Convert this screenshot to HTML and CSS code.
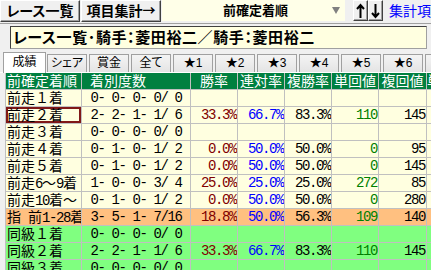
FILE: index.html
```html
<!DOCTYPE html>
<html lang="ja">
<head>
<meta charset="utf-8">
<title>集計</title>
<link rel="stylesheet" href="styles.css">
</head>
<body>
<div class="app">
  <div class="toolbar">
    <div class="btn btn-list">レース一覧</div>
    <div class="btn btn-agg">項目集計<span class="fw">→</span></div>
    <div class="combo"><span class="combo-text">前確定着順</span><span class="combo-arrow"></span></div>
    <div class="arrows">
      <div class="abtn"><svg width="9" height="16" viewBox="0 0 9 16"><path d="M4.5 2V15M1 6L4.5 2L8 6" fill="none" stroke="#000" stroke-width="2"/></svg></div>
      <div class="abtn"><svg width="9" height="16" viewBox="0 0 9 16"><path d="M4.5 1V14M1 10L4.5 14L8 10" fill="none" stroke="#000" stroke-width="2"/></svg></div>
    </div>
    <div class="link">集計項目</div>
  </div>
  <div class="titlebar">
    <div class="titlebox">レース一覧･騎手：菱田裕二／騎手：菱田裕二</div>
  </div>
  <div class="tabs">
    <div class="tab active">成績</div>
    <div class="tab">シェア</div>
    <div class="tab">賞金</div>
    <div class="tab">全て</div>
    <div class="tab">★1</div>
    <div class="tab">★2</div>
    <div class="tab">★3</div>
    <div class="tab">★4</div>
    <div class="tab">★5</div>
    <div class="tab">★6</div>
    <div class="tab">★7</div>
  </div>
  <div class="table">
    <div class="row head">
      <div class="c name">前確定着順</div>
      <div class="c cnt-h">着別度数</div>
      <div class="c ctr">勝率</div>
      <div class="c ctr">連対率</div>
      <div class="c ctr">複勝率</div>
      <div class="c ctr">単回値</div>
      <div class="c ctr">複回値</div>
      <div class="c">単勝人</div>
    </div>
    <div class="row">
      <div class="c name">前走１着</div>
      <div class="c cnt">0- 0- 0- 0/ 0</div>
      <div class="c num win"></div><div class="c num ren"></div><div class="c num"></div><div class="c num tan"></div><div class="c num"></div><div class="c"></div>
    </div>
    <div class="row">
      <div class="c name sel">前走２着</div>
      <div class="c cnt">2- 2- 1- 1/ 6</div>
      <div class="c num win">33.3%</div><div class="c num ren">66.7%</div><div class="c num">83.3%</div><div class="c num tan">110</div><div class="c num">145</div><div class="c"></div>
    </div>
    <div class="row">
      <div class="c name">前走３着</div>
      <div class="c cnt">0- 0- 0- 0/ 0</div>
      <div class="c num win"></div><div class="c num ren"></div><div class="c num"></div><div class="c num tan"></div><div class="c num"></div><div class="c"></div>
    </div>
    <div class="row">
      <div class="c name">前走４着</div>
      <div class="c cnt">0- 1- 0- 1/ 2</div>
      <div class="c num win">0.0%</div><div class="c num ren">50.0%</div><div class="c num">50.0%</div><div class="c num tan">0</div><div class="c num">95</div><div class="c"></div>
    </div>
    <div class="row">
      <div class="c name">前走５着</div>
      <div class="c cnt">0- 1- 0- 1/ 2</div>
      <div class="c num win">0.0%</div><div class="c num ren">50.0%</div><div class="c num">50.0%</div><div class="c num tan">0</div><div class="c num">145</div><div class="c"></div>
    </div>
    <div class="row">
      <div class="c name">前走<span class="hw">6</span>～<span class="hw">9</span>着</div>
      <div class="c cnt">1- 0- 0- 3/ 4</div>
      <div class="c num win">25.0%</div><div class="c num ren">25.0%</div><div class="c num">25.0%</div><div class="c num tan">272</div><div class="c num">85</div><div class="c"></div>
    </div>
    <div class="row">
      <div class="c name">前走<span class="hw">10</span>着～</div>
      <div class="c cnt">0- 1- 0- 1/ 2</div>
      <div class="c num win">0.0%</div><div class="c num ren">50.0%</div><div class="c num">50.0%</div><div class="c num tan">0</div><div class="c num">280</div><div class="c"></div>
    </div>
    <div class="row orange">
      <div class="c name">指<span class="hw"> </span>前<span class="hw">1-28</span>着</div>
      <div class="c cnt">3- 5- 1- 7/16</div>
      <div class="c num win">18.8%</div><div class="c num ren">50.0%</div><div class="c num">56.3%</div><div class="c num tan">109</div><div class="c num">140</div><div class="c"></div>
    </div>
    <div class="row green">
      <div class="c name">同級１着</div>
      <div class="c cnt">0- 0- 0- 0/ 0</div>
      <div class="c num win"></div><div class="c num ren"></div><div class="c num"></div><div class="c num tan"></div><div class="c num"></div><div class="c"></div>
    </div>
    <div class="row green">
      <div class="c name">同級２着</div>
      <div class="c cnt">2- 2- 1- 1/ 6</div>
      <div class="c num win">33.3%</div><div class="c num ren">66.7%</div><div class="c num">83.3%</div><div class="c num tan">110</div><div class="c num">145</div><div class="c"></div>
    </div>
    <div class="row green">
      <div class="c name">同級３着</div>
      <div class="c cnt">0- 0- 0- 0/ 0</div>
      <div class="c num win"></div><div class="c num ren"></div><div class="c num"></div><div class="c num tan"></div><div class="c num"></div><div class="c"></div>
    </div>
  </div>
</div>
</body>
</html>
```

FILE: styles.css
```css
html, body {
  margin: 0;
  padding: 0;
}
body {
  background: #f0f0f0;
  font-family: "Liberation Sans", "Noto Sans CJK JP", sans-serif;
  color: #000;
}
.app {
  width: 431px;
  height: 270px;
  overflow: hidden;
  background: #f0f0f0;
}

/* toolbar */
.toolbar {
  display: flex;
  height: 22px;
  align-items: flex-start;
  white-space: nowrap;
}
.toolbar > div {
  flex: none;
}
.btn {
  box-sizing: border-box;
  width: 80px;
  height: 22px;
  border: 1px solid;
  border-color: #ffffff #404040 #404040 #ffffff;
  box-shadow: inset -1px -1px 0 #a0a0a0;
  background: #f0f0f0;
  font-size: 14px;
  font-weight: bold;
  line-height: 20px;
  text-align: center;
  font-feature-settings: "palt";
}
.btn-agg {
  margin-left: 1px;
}
.fw {
  font-family: "Noto Sans CJK JP", sans-serif;
  font-size: 13px;
  line-height: 18px;
  vertical-align: top;
}
.combo {
  box-sizing: border-box;
  margin-left: 1px;
  width: 183px;
  height: 21px;
  background: #ffffe8;
  position: relative;
  display: flex;
  align-items: center;
}
.combo-text {
  margin-left: 61px;
  font-size: 13px;
  font-weight: bold;
  line-height: 19px;
}
.combo-arrow {
  position: absolute;
  right: 5px;
  top: 7px;
  width: 0;
  height: 0;
  border-left: 4px solid transparent;
  border-right: 4px solid transparent;
  border-top: 7px solid #808080;
}
.arrows {
  display: flex;
  margin-left: 8px;
  height: 21px;
}
.abtn {
  box-sizing: border-box;
  width: 15px;
  height: 21px;
  border: 1px solid;
  border-color: #ffffff #404040 #404040 #ffffff;
  box-shadow: inset -1px -1px 0 #a0a0a0;
  display: flex;
  align-items: center;
  justify-content: center;
}
.abtn svg {
  display: block;
}
.link {
  margin-left: 6px;
  color: #0000ff;
  font-size: 14px;
  line-height: 22px;
}

/* title */
.titlebar {
  margin-top: 1px;
  border-top: 1px solid #a0a0a0;
  padding: 2px 4px 0 10px;
}
.titlebox {
  box-sizing: border-box;
  height: 23px;
  background: #ffffe0;
  border: 1px solid;
  border-color: #404040 #a0a0a0 #a0a0a0 #404040;
  font-size: 15px;
  font-weight: bold;
  line-height: 21px;
  padding-left: 2px;
  letter-spacing: 0.6px;
  white-space: nowrap;
  overflow: hidden;
  font-feature-settings: "palt";
}

/* tabs */
.tabs {
  display: flex;
  align-items: flex-end;
  margin-top: 3px;
  height: 20px;
  padding-left: 3px;
  border-bottom: 1px solid #ffffff;
  white-space: nowrap;
}
.tab {
  box-sizing: border-box;
  flex: none;
  width: 40px;
  height: 18px;
  margin-left: 2px;
  border: 1px solid #a0a0a0;
  border-bottom: none;
  background: linear-gradient(#f4f4f4, #e4e4e4);
  font-size: 12px;
  line-height: 17px;
  text-align: center;
  font-feature-settings: "palt";
}
.tab.active {
  width: 43px;
  height: 21px;
  margin-left: 0;
  margin-right: -1px;
  margin-bottom: -1px;
  background: #ffffff;
  position: relative;
  line-height: 19px;
}

/* table */
.table {
  display: flex;
  flex-direction: column;
  gap: 1px;
  margin-left: 5px;
  padding-left: 1px;
  background: #c0c0c0;
  width: 480px;
}
.row {
  display: grid;
  grid-template-columns: 75px 108px 46px 46px 46px 46px 47px 60px;
  column-gap: 1px;
  height: 16px;
}
.c {
  background: #ffffe0;
  font-size: 14px;
  line-height: 16px;
  white-space: nowrap;
  overflow: hidden;
  box-sizing: border-box;
}
.row.head .c {
  background: #008040;
  color: #ffffff;
}
.row.orange .c {
  background: #ffc080;
}
.row.green .c {
  background: #80ff80;
}
.name {
  padding-left: 1px;
}
.sel {
  box-shadow: inset 0 0 0 2px #801818;
}
.hw,
.cnt,
.num {
  font-family: "Liberation Mono", monospace;
  letter-spacing: -1.4px;
  white-space: pre;
}
.cnt-h {
  padding-left: 8px;
}
.ctr {
  text-align: center;
}
.cnt {
  text-align: center;
}
.num {
  text-align: right;
  padding-right: 1px;
}
.win { color: #800000; }
.ren { color: #0000ff; }
.tan { color: #008000; }
```
